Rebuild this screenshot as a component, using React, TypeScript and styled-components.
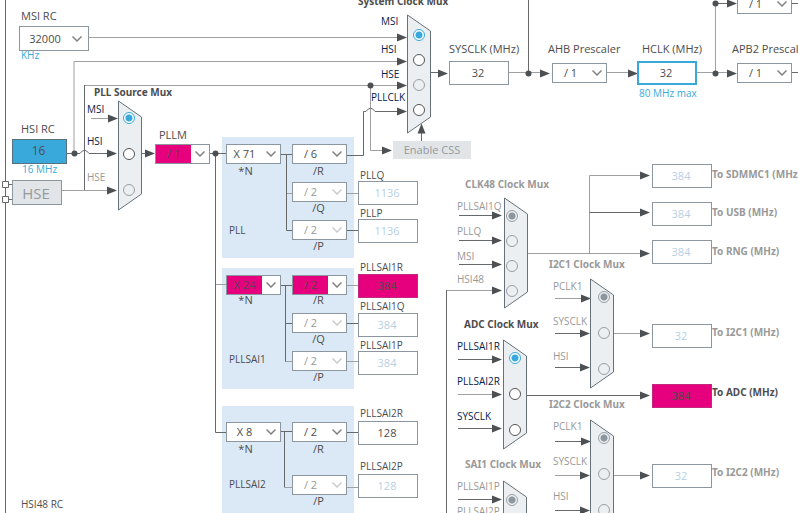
import React, { useState } from 'react';
import styled, { createGlobalStyle, css } from 'styled-components';

const color = {
  ink: '#4d4d4d',
  muted: '#999999',
  faint: '#b8cfe5',
  navy: '#03234b',
  blue: '#39a9dc',
  pink: '#e6007e',
  border: '#8c969e',
  panel: '#dae9f5',
  body: '#ebeff2',
  button: '#e1e5e8',
  wire: '#66686a',
  wireLight: '#a0a0a0',
  head: '#4d5052',
};

const GlobalStyle = createGlobalStyle`
  *, *::before, *::after { box-sizing: border-box; }
  body { margin: 0; background: #ffffff; }
  button, input, select { font: inherit; }
`;

/* ---------- canvas and its nodes ---------- */

const Canvas = styled.main`
  position: relative;
  width: 100%;
  height: 100vh;
  overflow: hidden;
  color: ${color.ink};
  font-family: 'Open Sans', 'Noto Sans', sans-serif;
  font-size: 11px;
  line-height: 12px;
`;

const Wiring = styled.svg`
  position: absolute;
  top: 0;
  left: 0;
  width: 100%;
  height: 100%;
  overflow: visible;
  pointer-events: none;
`;

interface Place {
  $x: number;
  $y: number;
}

const onCanvas = css<Place>`
  position: absolute;
  left: ${(p) => p.$x}px;
  top: ${(p) => p.$y}px;
`;

const Node = styled.div<Place & { $gap?: number }>`
  ${onCanvas}
  display: flex;
  flex-direction: column;
  gap: ${(p) => p.$gap ?? 0}px;
`;

const Field = styled.div`
  display: flex;
  flex-direction: column;
  align-items: flex-start;
`;

/* ---------- PLL panels ---------- */

const Panel = styled.section<Place & { $pad: number }>`
  ${onCanvas}
  display: flex;
  gap: 11px;
  padding: ${(p) => p.$pad}px 7px 0 4px;
  background: ${color.panel};
`;

const Multiplier = styled.div`
  display: flex;
  flex-direction: column;
  justify-content: space-between;
`;

const Dividers = styled.div<{ $pitch: number }>`
  display: grid;
  grid-auto-rows: ${(p) => p.$pitch}px;
`;

const PanelName = styled.h3<{ $lift: number }>`
  margin: 0 0 ${(p) => p.$lift}px 3px;
  font-size: 10px;
  font-weight: 400;
`;

/* ---------- texts ---------- */

const MuxTitle = styled.h2<Place & { $muted?: boolean }>`
  ${onCanvas}
  margin: 0;
  font: 700 10px/12px 'Noto Sans', sans-serif;
  white-space: nowrap;
  color: ${(p) => (p.$muted ? color.muted : color.ink)};
`;

const InputLabel = styled.label<Place & { $muted?: boolean }>`
  ${onCanvas}
  font-size: 10px;
  white-space: nowrap;
  color: ${(p) => (p.$muted ? color.muted : color.navy)};
`;

const Caption = styled.label<{ $shift: number; $gap: number; $small?: boolean }>`
  height: 12px;
  margin-left: ${(p) => p.$shift}px;
  margin-bottom: ${(p) => p.$gap}px;
  font-size: ${(p) => (p.$small ? 10 : 11)}px;
  white-space: nowrap;
`;

const SourceName = styled(Node)`
  font-size: 10px;
  white-space: nowrap;
`;

const Ratio = styled.span<{ $gap: number; $left?: boolean }>`
  height: 10px;
  width: 55px;
  margin-top: ${(p) => p.$gap}px;
  padding-right: ${(p) => (p.$left ? 16 : 2)}px;
  line-height: 10px;
  text-align: center;
`;

const Unit = styled.output<{ $gap: number; $indent: number }>`
  height: 10px;
  margin: ${(p) => p.$gap}px 0 0 ${(p) => p.$indent}px;
  color: ${color.blue};
  font-size: 10px;
  line-height: 10px;
  white-space: nowrap;
`;

/* ---------- controls ---------- */

const SelectShell = styled.span<{ $w: number; $h: number; $error?: boolean }>`
  display: grid;
  grid-template-columns: 1fr 18px;
  align-items: center;
  width: ${(p) => p.$w}px;
  height: ${(p) => p.$h}px;
  border: 1px solid ${color.border};
  background: ${(p) => (p.$error ? `linear-gradient(to right, ${color.pink} 35px, #ffffff 35px)` : '#ffffff')};
`;

const NativeSelect = styled.select`
  grid-area: 1 / 1 / 2 / 3;
  width: 100%;
  height: 100%;
  padding: 0 18px 0 0;
  border: 0;
  border-radius: 0;
  appearance: none;
  background: transparent;
  color: ${color.ink};
  text-align: center;
  text-align-last: center;
  &:disabled {
    color: ${color.muted};
    opacity: 1;
  }
`;

const Chevron = styled.svg<{ $faint?: boolean; $inset: number }>`
  grid-area: 1 / 2 / 2 / 3;
  width: 10px;
  height: 6px;
  justify-self: center;
  margin-right: ${(p) => p.$inset}px;
  pointer-events: none;
  fill: none;
  stroke: ${(p) => (p.$faint ? '#cccccc' : '#828282')};
  stroke-width: 1.5;
`;

type Tone = 'normal' | 'off' | 'error' | 'focus' | 'source';

const tones = {
  normal: css``,
  off: css`
    color: ${color.faint};
  `,
  error: css`
    background: ${color.pink};
    border-color: #c2287f;
  `,
  focus: css`
    border: 2px solid ${color.blue};
  `,
  source: css`
    background: ${color.blue};
    border-color: #55707e;
    font-size: 12px;
  `,
};

const ValueInput = styled.input<{ $w: number; $h: number; $tone: Tone }>`
  width: ${(p) => p.$w}px;
  height: ${(p) => p.$h}px;
  padding: 0 2px 2px 0;
  border: 1px solid ${color.border};
  border-radius: 0;
  outline: 0;
  background: #ffffff;
  color: ${color.ink};
  text-align: center;
  ${(p) => tones[p.$tone]}
`;

const OutputRow = styled.div`
  display: flex;
  align-items: flex-start;
`;

const OutputLabel = styled.label<{ $drop: number; $muted?: boolean }>`
  padding-top: ${(p) => p.$drop}px;
  font: 700 10px/12px 'Noto Sans', sans-serif;
  white-space: nowrap;
  color: ${(p) => (p.$muted ? color.muted : color.ink)};
`;

const FlatButton = styled.button`
  width: 78px;
  height: 18px;
  padding: 0;
  border: 0;
  background: ${color.button};
  color: #95999c;
  font-size: 11px;
  line-height: 16px;
  text-align: center;
`;

const SourceButton = styled(FlatButton)`
  width: 50px;
  height: 25px;
  padding-right: 2px;
  border: 1px solid ${color.border};
  font-size: 15px;
`;

/* ---------- multiplexer ---------- */

const MuxBody = styled.div<Place>`
  ${onCanvas}
  display: grid;
`;

const MuxShape = styled.svg`
  grid-area: 1 / 1;
  fill: ${color.body};
  stroke: #66717a;
  stroke-width: 1;
`;

const RadioColumn = styled.div<{ $top: number; $left: number; $gap: number }>`
  grid-area: 1 / 1;
  z-index: 1;
  display: flex;
  flex-direction: column;
  gap: ${(p) => p.$gap}px;
  padding: ${(p) => p.$top}px 0 0 ${(p) => p.$left}px;
`;

const Radio = styled.input`
  flex: none;
  width: 12px;
  height: 12px;
  margin: 0;
  border: 1px solid #555555;
  border-radius: 50%;
  appearance: none;
  background: #ffffff;
  &:checked {
    border-color: ${color.blue};
    background: radial-gradient(circle, ${color.blue} 3px, #ffffff 4px);
  }
  &:disabled {
    border-color: #9a9fa3;
    background: transparent;
  }
  &:disabled:checked {
    background: radial-gradient(circle, #8c969e 3px, transparent 4px);
  }
`;

/* ---------- composed parts ---------- */

interface PickProps {
  id: string;
  options: string[];
  w?: number;
  h?: number;
  label?: string;
  shift?: number;
  gap?: number;
  ratio?: string;
  ratioGap?: number;
  unit?: string;
  off?: boolean;
  error?: boolean;
}

function Pick({ id, options, w = 55, h = 20, label, shift = 0, gap = 0, ratio, ratioGap = 0, unit, off, error }: PickProps) {
  return (
    <Field>
      {label && (
        <Caption htmlFor={id} $shift={shift} $gap={gap}>
          {label}
        </Caption>
      )}
      <SelectShell $w={w} $h={h} $error={error}>
        <NativeSelect id={id} aria-label={label ? undefined : id} disabled={off} defaultValue={options[0]}>
          {options.map((o) => (
            <option key={o}>{o}</option>
          ))}
        </NativeSelect>
        <Chevron viewBox="0 0 10 6" $faint={off} $inset={w > 60 ? 4 : 0} aria-hidden="true">
          <path d="M0.5 0.5 L5 5 L9.5 0.5" />
        </Chevron>
      </SelectShell>
      {ratio && (
        <Ratio $gap={ratioGap} $left={ratio === '*N'}>
          {ratio}
        </Ratio>
      )}
      {unit && (
        <Unit htmlFor={id} $gap={-1} $indent={2}>
          {unit}
        </Unit>
      )}
    </Field>
  );
}

interface ValueProps {
  id: string;
  value: string;
  label: string;
  tone?: Tone;
  w?: number;
  h?: number;
  shift?: number;
  gap?: number;
  small?: boolean;
  unit?: string;
  unitGap?: number;
  unitIndent?: number;
}

function Value({ id, value, label, tone = 'normal', w = 60, h = 24, shift = 2, gap = 0, small, unit, unitGap = 0, unitIndent = 2 }: ValueProps) {
  return (
    <Field>
      <Caption htmlFor={id} $shift={shift} $gap={gap} $small={small}>
        {label}
      </Caption>
      <ValueInput id={id} $w={w} $h={h} $tone={tone} defaultValue={value} readOnly={tone !== 'focus'} />
      {unit && (
        <Unit htmlFor={id} $gap={unitGap} $indent={unitIndent}>
          {unit}
        </Unit>
      )}
    </Field>
  );
}

interface Divider {
  ratio: string;
  options: string[];
  off?: boolean;
  error?: boolean;
}

interface PllProps {
  id: string;
  name: string;
  x: number;
  y: number;
  pad: number;
  pitch: number;
  lift: number;
  ratioGap: number;
  factor: string[];
  error?: boolean;
  dividers: Divider[];
}

function Pll({ id, name, x, y, pad, pitch, lift, ratioGap, factor, error, dividers }: PllProps) {
  return (
    <Panel $x={x} $y={y} $pad={pad} aria-label={name}>
      <Multiplier>
        <Pick id={`${id}-n`} options={factor} ratio="*N" ratioGap={ratioGap} error={error} />
        <PanelName $lift={lift}>{name}</PanelName>
      </Multiplier>
      <Dividers $pitch={pitch}>
        {dividers.map((d, i) => (
          <Pick
            key={d.ratio}
            id={`${id}${d.ratio}`}
            options={d.options}
            ratio={d.ratio}
            ratioGap={i === 0 ? ratioGap : 1}
            off={d.off}
            error={d.error}
          />
        ))}
      </Dividers>
    </Panel>
  );
}

interface MuxInput {
  name: string;
  x: number;
  baseline: number;
  off?: boolean;
  muted?: boolean;
}

interface MuxProps {
  id: string;
  title: string;
  titleX: number;
  titleBaseline: number;
  x: number;
  y: number;
  h: number;
  radioTop: number;
  radioLeft: number;
  radioGap: number;
  inputs: MuxInput[];
  off?: boolean;
}

function Mux({ id, title, titleX, titleBaseline, x, y, h, radioTop, radioLeft, radioGap, inputs, off }: MuxProps) {
  const [chosen, setChosen] = useState(0);
  return (
    <>
      <MuxTitle $x={titleX} $y={titleBaseline - 10} $muted={off}>
        {title}
      </MuxTitle>
      {inputs.map((input, i) => (
        <InputLabel key={input.name} htmlFor={`${id}-${i}`} $x={input.x} $y={input.baseline - 10} $muted={off || input.muted}>
          {input.name}
        </InputLabel>
      ))}
      <MuxBody $x={x} $y={y} role="radiogroup" aria-label={title}>
        <MuxShape width={24} height={h} aria-hidden="true">
          <path d={`M0.5 1 L23.5 17 V${h - 17} L0.5 ${h - 1} Z`} />
        </MuxShape>
        <RadioColumn $top={radioTop} $left={radioLeft} $gap={radioGap}>
          {inputs.map((input, i) => (
            <Radio
              key={input.name}
              type="radio"
              id={`${id}-${i}`}
              name={id}
              checked={chosen === i}
              disabled={off || input.off}
              onChange={() => setChosen(i)}
            />
          ))}
        </RadioColumn>
      </MuxBody>
    </>
  );
}

interface OutputProps {
  id: string;
  value: string;
  label: string;
  drop?: number;
  error?: boolean;
}

function Output({ id, value, label, drop = 2, error }: OutputProps) {
  return (
    <OutputRow>
      <ValueInput id={id} $w={60} $h={24} $tone={error ? 'error' : 'off'} defaultValue={value} readOnly />
      <OutputLabel htmlFor={id} $drop={drop} $muted={!error}>
        {label}
      </OutputLabel>
    </OutputRow>
  );
}

/* ---------- data ---------- */

const darkWires = [
  'M5.5 0 V513',
  'M8 184.5 H12 M8 199.5 H12',
  'M84.5 190 V85',
  'M67 153.5 H80 Q84.5 147 89 153.5 H108',
  'M141 153.5 H147',
  'M210 153.5 H226',
  'M215.5 153 V432.5 H226',
  'M347 155.5 H363.5 V111.5 H366 Q370.5 105 375 111.5 H398',
  'M347 230.5 H358',
  'M281 285.5 H292 M285.5 285 V361.5 M285.5 323.5 H292 M347 323.5 H358',
  'M281 431.5 H292 M284.5 431 V487.5 M347 432.5 H358',
  'M431 72.5 H439',
  'M528.5 0 V73',
  'M715 3.5 H728 M792 3.5 H798 M792 72.5 H798',
  'M421.5 132 V141',
  'M459 215.5 H494 M459 240.5 H494 M459 264.5 H494',
  'M446.5 290 V513',
  'M589.5 212.5 H641',
  'M458 359.5 H494 M458 428.5 H494 M458 499.5 H494',
  'M555 333.5 H581 M555 367.5 H581 M555 441.5 H583 M555 510.5 H581',
  'M526 395.5 H641',
  'M281 154.5 H292 M286.5 154 V230.5 H292',
];

const lightWires = [
  'M89 37.5 H398',
  'M74 153 V61.5 H398',
  'M84 85.5 H398',
  'M91 118.5 H110',
  'M62 190.5 H108',
  'M370.5 86 V150.5 H383',
  'M215 284.5 H226',
  'M286 193.5 H292 M347 193.5 H358',
  'M285 361.5 H292 M347 361.5 H358 M347 285.5 H358',
  'M285 487.5 H292 M347 487.5 H358',
  'M509 72.5 H541 M607 72.5 H629 M697 72.5 H728',
  'M715.5 3 V73',
  'M446 290.5 H494',
  'M527 253.5 H641 M589.5 253 V175.5 H641',
  'M458 394.5 H494',
  'M555 298.5 H582 M555 475.5 H581',
  'M613 333.5 H641 M613 475.5 H641',
];

const heads: [number, number][] = [
  [407, 37], [407, 61], [407, 85], [407, 111], [392, 150],
  [118, 118], [117, 153], [117, 190], [155, 153],
  [448, 73], [550, 73], [638, 73], [737, 73], [737, 3],
  [502, 215], [502, 240], [502, 264], [502, 290],
  [650, 175], [650, 212], [650, 253], [650, 333], [650, 395], [650, 475],
  [502, 359], [502, 394], [502, 428], [502, 499],
  [591, 298], [590, 333], [590, 367], [591, 441], [590, 475], [590, 510],
];

const joints: [number, number][] = [
  [74, 153], [215, 153], [370, 85], [528, 73], [715, 73], [715, 3],
];

const halves = ['/ 2', '/ 4', '/ 6', '/ 8'];

const plls: PllProps[] = [
  {
    id: 'pll', name: 'PLL', x: 222, y: 137, pad: 7, pitch: 38, lift: 22, ratioGap: 2,
    factor: ['X 71', 'X 8'],
    dividers: [
      { ratio: '/R', options: ['/ 6', '/ 2'] },
      { ratio: '/Q', options: halves, off: true },
      { ratio: '/P', options: halves, off: true },
    ],
  },
  {
    id: 'pllsai1', name: 'PLLSAI1', x: 222, y: 268, pad: 7, pitch: 38, lift: 24, ratioGap: 0,
    factor: ['X 24', 'X 8'], error: true,
    dividers: [
      { ratio: '/R', options: halves, error: true },
      { ratio: '/Q', options: halves, off: true },
      { ratio: '/P', options: halves, off: true },
    ],
  },
  {
    id: 'pllsai2', name: 'PLLSAI2', x: 222, y: 406, pad: 16, pitch: 53, lift: 38, ratioGap: 2,
    factor: ['X 8', 'X 16'],
    dividers: [
      { ratio: '/R', options: halves },
      { ratio: '/P', options: halves, off: true },
    ],
  },
];

const muxes: MuxProps[] = [
  {
    id: 'pllsrc', title: 'PLL Source Mux', titleX: 94, titleBaseline: 96, x: 118, y: 100, h: 111,
    radioTop: 12, radioLeft: 5, radioGap: 24,
    inputs: [
      { name: 'MSI', x: 87, baseline: 113 },
      { name: 'HSI', x: 87, baseline: 145 },
      { name: 'HSE', x: 87, baseline: 181, off: true, muted: true },
    ],
  },
  {
    id: 'sysclk-mux', title: 'System Clock Mux', titleX: 358, titleBaseline: 5, x: 407, y: 14, h: 120,
    radioTop: 15, radioLeft: 6, radioGap: 13,
    inputs: [
      { name: 'MSI', x: 381, baseline: 25 },
      { name: 'HSI', x: 381, baseline: 53 },
      { name: 'HSE', x: 381, baseline: 78, off: true },
      { name: 'PLLCLK', x: 371, baseline: 101 },
    ],
  },
  {
    id: 'clk48', title: 'CLK48 Clock Mux', titleX: 465, titleBaseline: 188, x: 504, y: 197, h: 112, off: true,
    radioTop: 13, radioLeft: 2, radioGap: 13,
    inputs: [
      { name: 'PLLSAI1Q', x: 457, baseline: 210 },
      { name: 'PLLQ', x: 457, baseline: 235 },
      { name: 'MSI', x: 457, baseline: 260 },
      { name: 'HSI48', x: 457, baseline: 283 },
    ],
  },
  {
    id: 'i2c1', title: 'I2C1 Clock Mux', titleX: 549, titleBaseline: 268, x: 590, y: 278, h: 111, off: true,
    radioTop: 13, radioLeft: 8, radioGap: 24,
    inputs: [
      { name: 'PCLK1', x: 553, baseline: 290 },
      { name: 'SYSCLK', x: 553, baseline: 325 },
      { name: 'HSI', x: 553, baseline: 360 },
    ],
  },
  {
    id: 'adc', title: 'ADC Clock Mux', titleX: 464, titleBaseline: 328, x: 503, y: 339, h: 111,
    radioTop: 13, radioLeft: 6, radioGap: 24,
    inputs: [
      { name: 'PLLSAI1R', x: 457, baseline: 350 },
      { name: 'PLLSAI2R', x: 457, baseline: 385 },
      { name: 'SYSCLK', x: 457, baseline: 420 },
    ],
  },
  {
    id: 'i2c2', title: 'I2C2 Clock Mux', titleX: 549, titleBaseline: 408, x: 590, y: 419, h: 111, off: true,
    radioTop: 13, radioLeft: 8, radioGap: 24,
    inputs: [
      { name: 'PCLK1', x: 553, baseline: 430 },
      { name: 'SYSCLK', x: 553, baseline: 465 },
      { name: 'HSI', x: 553, baseline: 500 },
    ],
  },
  {
    id: 'sai1', title: 'SAI1 Clock Mux', titleX: 465, titleBaseline: 468, x: 503, y: 480, h: 111, off: true,
    radioTop: 14, radioLeft: 3, radioGap: 24,
    inputs: [
      { name: 'PLLSAI1P', x: 457, baseline: 490 },
      { name: 'PLLSAI2P', x: 457, baseline: 515 },
    ],
  },
];

export default function App() {
  return (
    <>
      <GlobalStyle />
      <Canvas>
        {plls.map((p) => (
          <Pll key={p.id} {...p} />
        ))}

        <Wiring aria-hidden="true" fill="none">
          <path d={lightWires.join(' ')} stroke={color.wireLight} />
          <path d={darkWires.join(' ')} stroke={color.wire} />
          {heads.map(([x, y]) => (
            <path key={`${x}-${y}`} d={`M${x} ${y + 0.5} l-10 -4 v8 z`} fill={color.head} />
          ))}
          <path d="M421.5 123.5 l-4 10 h8 z" fill={color.head} />
          {joints.map(([x, y]) => (
            <circle key={`${x}-${y}`} cx={x + 0.5} cy={y + 0.5} r="3" fill={color.head} />
          ))}
          <path d="M2.5 181.5 h6 v6 h-6 z M2.5 196.5 h6 v6 h-6 z" fill="#ffffff" stroke={color.wire} />
        </Wiring>

        {muxes.map((m) => (
          <Mux key={m.id} {...m} />
        ))}

        <Node $x={19} $y={10}>
          <Pick id="msi-rc" label="MSI RC" w={70} h={25} shift={2} gap={4} options={['32000', '16000', '8000']} unit="KHz" />
        </Node>
        <Node $x={12} $y={123} $gap={6}>
          <Value id="hsi-rc" label="HSI RC" w={55} h={25} shift={9} gap={4} value="16" tone="source" unit="16 MHz" unitIndent={10} />
          <SourceButton type="button" disabled>HSE</SourceButton>
        </Node>
        <SourceName $x={21} $y={498}>HSI48 RC</SourceName>
        <Node $x={155} $y={129}>
          <Pick id="pllm" label="PLLM" shift={4} gap={3} options={['/ 1', '/ 2']} error />
        </Node>

        <Node $x={358} $y={169} $gap={2}>
          <Value id="pllq" label="PLLQ" small value="1136" tone="off" />
          <Value id="pllp" label="PLLP" small value="1136" tone="off" />
        </Node>
        <Node $x={358} $y={261} $gap={2}>
          <Value id="pllsai1r" label="PLLSAI1R" small gap={1} value="384" tone="error" />
          <Value id="pllsai1q" label="PLLSAI1Q" small gap={1} value="384" tone="off" />
          <Value id="pllsai1p" label="PLLSAI1P" small value="384" tone="off" />
        </Node>
        <Node $x={358} $y={407} $gap={15}>
          <Value id="pllsai2r" label="PLLSAI2R" small gap={2} value="128" />
          <Value id="pllsai2p" label="PLLSAI2P" small gap={2} value="128" tone="off" />
        </Node>

        <Node $x={393} $y={141}>
          <FlatButton type="button" disabled>Enable CSS</FlatButton>
        </Node>

        <Node $x={449} $y={43}>
          <Value id="sysclk" label="SYSCLK (MHz)" shift={0} gap={6} value="32" />
        </Node>
        <Node $x={552} $y={43}>
          <Pick id="ahb" label="AHB Prescaler" shift={-4} gap={8} options={['/ 1', '/ 2']} />
        </Node>
        <Node $x={637} $y={43}>
          <Value id="hclk" label="HCLK (MHz)" shift={5} gap={6} value="32" tone="focus" unit="80 MHz max" unitGap={3} />
        </Node>
        <Node $x={737} $y={-6}>
          <Pick id="apb1" options={['/ 1', '/ 2']} />
        </Node>
        <Node $x={737} $y={43}>
          <Pick id="apb2" label="APB2 Prescaler" shift={-5} gap={8} options={['/ 1', '/ 2']} />
        </Node>

        <Node $x={652} $y={164} $gap={14}>
          <Output id="sdmmc1" value="384" label="To SDMMC1 (MHz)" drop={4} />
          <Output id="usb" value="384" label="To USB (MHz)" drop={4} />
          <Output id="rng" value="384" label="To RNG (MHz)" drop={5} />
        </Node>
        <Node $x={652} $y={324}>
          <Output id="i2c1-out" value="32" label="To I2C1 (MHz)" />
        </Node>
        <Node $x={652} $y={384}>
          <Output id="adc-out" value="384" label="To ADC (MHz)" error />
        </Node>
        <Node $x={652} $y={464}>
          <Output id="i2c2-out" value="32" label="To I2C2 (MHz)" />
        </Node>
      </Canvas>
    </>
  );
}
